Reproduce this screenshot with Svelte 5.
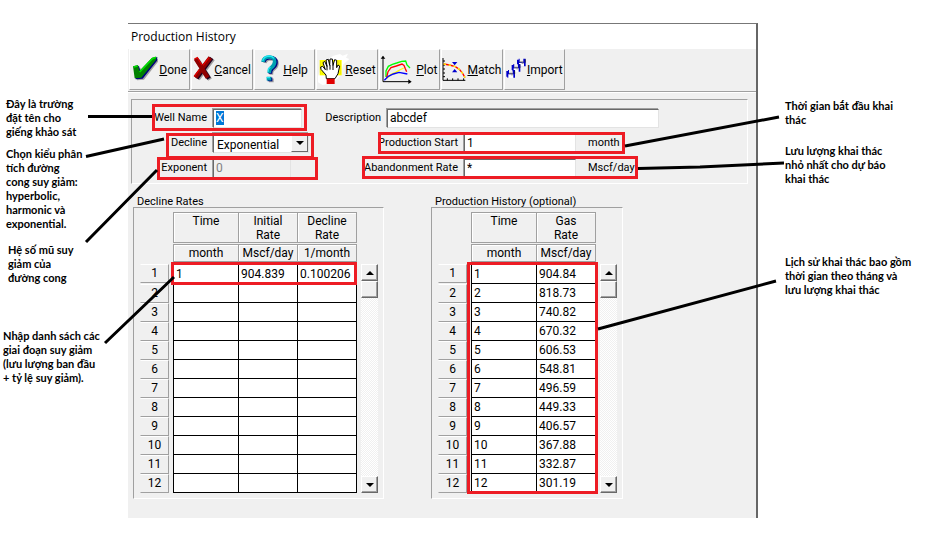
<script>
  import { onMount } from 'svelte';

  const declineRows = Array.from({ length: 12 }, (_, i) =>
    i === 0 ? ['1', '904.839', '0.100206'] : ['', '', '']
  );
  const rates = ['904.84', '818.73', '740.82', '670.32', '606.53', '548.81', '496.59', '449.33', '406.57', '367.88', '332.87', '301.19'];
  const tables = [
    {
      title: 'Decline Rates',
      heads: [['Time'], ['Initial', 'Rate'], ['Decline', 'Rate']],
      units: ['month', 'Mscf/day', '1/month'],
      rows: declineRows
    },
    {
      title: 'Production History (optional)',
      heads: [['Time'], ['Gas', 'Rate']],
      units: ['month', 'Mscf/day'],
      rows: rates.map((r, i) => [String(i + 1), r])
    }
  ];

  const leftNotes = [
    { cls: 'well', lines: ['Đây là trường', 'đặt tên cho', 'giếng khảo sát'] },
    { cls: 'kind', lines: ['Chọn kiểu phân', 'tích đường', 'cong suy giảm:', 'hyperbolic,', 'harmonic và', 'exponential.'] },
    { cls: 'expo', lines: ['Hệ số mũ suy', 'giảm của', 'đường cong'] },
    { cls: 'list', lines: ['Nhập danh sách các', 'giai đoạn suy giảm', '(lưu lượng ban đầu', '+ tỷ lệ suy giảm).'] }
  ];
  const rightNotes = [
    { cls: 'start', lines: ['Thời gian bắt đầu khai', 'thác'] },
    { cls: 'min', lines: ['Lưu lượng khai thác', 'nhỏ nhất cho dự báo', 'khai thác'] },
    { cls: 'past', lines: ['Lịch sử khai thác bao gồm', 'thời gian theo tháng và', 'lưu lượng khai thác'] }
  ];

  let wellName;
  onMount(() => {
    wellName.focus();
    wellName.select();
  });
</script>

{#snippet notes(list)}
  {#each list as note}
    <p class={note.cls}>{#each note.lines as line, i}{#if i}<br />{/if}{line}{/each}</p>
  {/each}
{/snippet}

<main>
  <aside class="left">{@render notes(leftNotes)}</aside>

  <section class="window">
    <h1>Production History</h1>

    <div class="toolbar">
      <div class="tools">
        <button type="button">
          <svg width="26" height="34" viewBox="0 0 78 102">
            <path fill="#a0a0a0" d="M10 48 25 44 30 58 66 20 78 17 78 26 36 80 15 82z" />
            <path fill="#000080" d="M6 43 21 39 25 55 63 16 76 12 75 23 32 77 11 79z" />
            <path fill="#008000" d="M3 40 18 36 22 54 60 14 73 11 72 20 28 74 8 76z" />
            <path fill="none" stroke="#00e000" stroke-width="5" d="M5 42 17 39M23 57 61 17 72 13" />
          </svg>
          <span><u>D</u>one</span>
        </button>
        <button type="button">
          <svg width="20" height="34" viewBox="0 0 60 102">
            <path fill="none" stroke="#a0a0a0" stroke-width="13" d="M15 22 51 80M60 18 15 78" />
            <path fill="none" stroke="#200020" stroke-width="13" d="M11 19 48 77M56 15 11 76" />
            <path fill="none" stroke="#900000" stroke-width="13" d="M8 17 44 74M52 14 7 73" />
            <path fill="none" stroke="#e00000" stroke-width="4" d="M4 18 13 14 27 36M48 14 30 37M19 50 4 71" />
          </svg>
          <span><u>C</u>ancel</span>
        </button>
        <button type="button">
          <svg width="18" height="34" viewBox="0 0 54 102">
            <g fill="none" stroke-width="11">
              <path stroke="#a0a0a0" d="M12 30Q14 17 30 17 48 18 48 32 47 43 36 50 31 54 31 65M24 82H38" />
              <path stroke="#000080" d="M9 27Q10 14 27 14 46 14 45 29 44 40 33 47 28 52 28 62M20 79H34" />
              <path stroke="#00a0b0" d="M6 27Q8 12 24 12 42 12 41 27 40 38 30 45 25 49 25 60M17 77H31" />
              <path stroke="#20e8f0" stroke-width="4" d="M5 24Q8 10 24 9 34 9 39 16M22 56V48L28 42M17 74H27" />
            </g>
          </svg>
          <span class="far"><u>H</u>elp</span>
        </button>
        <button type="button">
          <svg width="26" height="34" viewBox="0 0 78 102">
            <path fill="#fff" d="M0 70 8 50 20 26 46 8 66 3 74 8 90 2 84 14 94 18 76 34 66 70 44 90 14 96 0 88z" />
            <path fill="#ff0" d="M5 21H71V67H5z" />
            <path fill="none" stroke="#d8c800" stroke-width="40" stroke-dasharray="2 4" d="M7 44H71" opacity=".5" />
            <path fill="#fff" stroke="#000" stroke-width="3" d="M25 77 24 66 9 49 8 42 14 40 22 50 15 29 20 25 27 40 24 21 31 19 35 37 36 18 43 18 45 37 50 20 56 22 56 44 60 36 65 39 60 62 51 77z" />
            <path fill="none" stroke="#000" stroke-width="3" d="M27 38V52M36 36V50M45 36V51" />
            <path fill="#e00000" d="M26 77H50V93H26z" />
          </svg>
          <span><u>R</u>eset</span>
        </button>
        <button type="button">
          <svg width="31" height="34" viewBox="0 0 93 102">
            <path fill="none" stroke="#000" stroke-width="3" d="M6 11V86H88" />
            <path d="M-1 17 6 8 13 17zM82 79 92 86 82 93z" />
            <g fill="none" stroke-width="4">
              <path stroke="#0f0" d="M15 72V54L22 40 34 34 47 30 62 25 74 24 78 36 87 45" />
              <path stroke="#f00" d="M17 74 21 56 30 44 46 39 63 33 69 37 73 47 77 56" />
              <path stroke="#ff0" d="M18 76 30 64 44 58 56 51 68 45" />
              <path stroke="#00f" d="M10 82 22 70 37 63 54 58 79 63" />
            </g>
          </svg>
          <span class="far"><u>P</u>lot</span>
        </button>
        <button type="button">
          <svg width="24" height="34" viewBox="0 0 72 102">
            <path fill="none" stroke="#000" stroke-width="3" d="M3 15V82H70M3 24H9M3 36H9M3 48H9M3 60H9M3 71H9M16 82V76M32 82V76M48 82V76M65 82V76" />
            <path fill="none" stroke="#f00" stroke-width="4" d="M5 33 22 36 40 41 52 49 62 61 69 74" />
            <path fill="none" stroke="#ff0" stroke-width="4" stroke-dasharray="7 8" d="M5 33 22 36 40 41 52 49 62 61 69 74" />
            <path fill="#00c" d="M30 27H46L38 37zM30 58H46L38 48z" />
          </svg>
          <span><u>M</u>atch</span>
        </button>
        <button type="button">
          <svg width="20" height="34" viewBox="0 0 60 102">
            {#each [[33, 17], [17, 33], [1, 51]] as [x, y]}
              <g transform="translate({x} {y})">
                <path fill="#0000c8" d="M0 3H5V0H8V11H19V0H26V23H3V20H0z" />
                <path fill="#f0f0f0" d="M9 0H18V8H9z" />
                <path fill="#fff" d="M6 13H21V24H6z" />
                <path fill="none" stroke="#202020" stroke-width="2" d="M8 10H19M25 2V12" />
                <path fill="#a0a0a0" d="M14 12H20V16H14z" />
              </g>
            {/each}
          </svg>
          <span><u>I</u>mport</span>
        </button>
      </div>
    </div>

    <form class="details">
      <div class="col names">
        <div class="row"><label for="well">Well Name</label><input id="well" class="wide" bind:this={wellName} value="X" /></div>
        <div class="row">
          <label for="decline">Decline</label>
          <div class="drop">
            <select id="decline"><option>Exponential</option><option>Hyperbolic</option><option>Harmonic</option></select>
            <i class="arrow"></i>
          </div>
        </div>
        <div class="row"><label for="exponent">Exponent</label><input id="exponent" class="short" value="0" disabled /></div>
      </div>
      <div class="col limits">
        <div class="row"><label class="desc" for="description">Description</label><input id="description" class="long" value="abcdef" /></div>
        <div class="row"><label for="start">Production Start</label><input id="start" value="1" /><span class="unit">month</span></div>
        <div class="row"><label for="rate">Abandonment Rate</label><input id="rate" value="*" /><span class="unit">Mscf/day</span></div>
      </div>
    </form>

    <div class="grids">
      {#each tables as t}
        <section>
          <h2>{t.title}</h2>
          <div class="frame">
            <table aria-label={t.title}>
              <thead>
                <tr>
                  <td class="corner"></td>
                  {#each t.heads as head}
                    <th><div class="name">{#each head as word, i}{#if i}<br />{/if}{word}{/each}</div></th>
                  {/each}
                </tr>
                <tr>
                  <td class="corner"></td>
                  {#each t.units as unit}<th><div class="measure">{unit}</div></th>{/each}
                </tr>
              </thead>
              <tbody>
                {#each t.rows as row, n}
                  <tr>
                    <th class="num" scope="row"><div>{n + 1}</div></th>
                    {#each row as cell}<td>{cell}</td>{/each}
                  </tr>
                {/each}
              </tbody>
            </table>
            <div class="scroll">
              <button type="button" aria-label="Scroll up"><i class="up"></i></button>
              <div class="thumb"></div>
              <button type="button" class="end" aria-label="Scroll down"><i class="down"></i></button>
            </div>
          </div>
        </section>
      {/each}
    </div>
  </section>

  <aside class="right">{@render notes(rightNotes)}</aside>

  <svg class="marks" width="951" height="551" viewBox="0 0 951 551" aria-hidden="true">
    <g fill="none" stroke="#ed1c24" stroke-width="3">
      <rect x="153.500" y="105.500" width="152" height="24" />
      <rect x="167.500" y="134.500" width="145" height="23" />
      <rect x="158.500" y="158.500" width="158" height="20" />
      <rect x="379.500" y="133.500" width="244" height="19" />
      <rect x="363.500" y="157.500" width="273" height="20" />
      <rect x="172.500" y="263.500" width="183" height="20" />
      <rect x="468.500" y="263.500" width="128" height="229" />
    </g>
    <path fill="none" stroke="#000" stroke-width="3" d="M88 116.500H152M86 156.500 164 139M86 242 157 170M105 343 174 277M625 146 779 117M638 168.500 700 167 784 163M598 329 776 281" />
  </svg>
</main>

<style>
  :global(body) { margin: 0; background: #fff; }
  main {
    position: relative;
    display: grid;
    grid-template-columns: 128px minmax(630px, 1fr) 193px;
    align-items: start;
    font: 11px/14px Roboto, "Liberation Sans", sans-serif;
    color: #000;
  }
  input, select, button { font: inherit; color: inherit; box-sizing: border-box; margin: 0; }

  aside { font: bold 11px/14px Lato, "Open Sans", sans-serif; white-space: nowrap; }
  aside p { margin: 0; }
  .left { padding: 97px 0 0 3px; }
  .left .well, .left .kind { padding-left: 3px; }
  .left .kind { margin-top: 8px; }
  .left .expo { margin-top: 12px; padding-left: 5px; }
  .left .list { margin-top: 44px; }
  .right { padding: 99px 0 0 27px; }
  .right .min { margin-top: 17px; }
  .right .past { margin-top: 69px; }

  .window {
    margin-top: 23px;
    padding-bottom: 19px;
    border-top: 1px solid #777;
    border-right: 2px solid #666;
    background: #f0f0f0;
  }
  h1 {
    margin: 0;
    padding: 0 3px;
    background: #fff;
    font: 12px/25px "Open Sans", "Noto Sans", sans-serif;
  }
  .toolbar {
    padding: 0 1px 1px;
    border-bottom: 1px solid #a0a0a0;
    box-shadow: 0 1px #fff;
  }
  .tools {
    display: grid;
    grid-template-columns: repeat(7, minmax(0, 1fr));
    column-gap: 1px;
    max-width: 436px;
    font-size: 12px;
  }
  .tools button {
    display: flex;
    align-items: center;
    justify-content: center;
    gap: 1px;
    height: 41px;
    padding: 0;
    border: 1px solid;
    border-color: #fff #a0a0a0 #a0a0a0 #fff;
    background: #f0f0f0;
  }
  .tools svg { flex: none; overflow: visible; }
  .tools .far { margin-left: 3px; }

  .details {
    display: flex;
    margin: 7px 8px 0 3px;
    padding: 8px 0 5px;
    border: 1px solid;
    border-color: #a0a0a0 #fff #fff #a0a0a0;
  }
  .col { display: flex; flex-direction: column; gap: 5px; }
  .names { flex: 0 0 192px; }
  .limits { flex: 1; }
  .row { display: flex; align-items: center; height: 20px; }
  .row label { flex: none; text-align: right; margin-right: 6px; }
  .names label { width: 75px; }
  .limits label { width: 134px; }
  .limits label.desc { width: 57px; }
  .row input, .row select {
    width: 112px;
    height: 19px;
    padding: 0 2px;
    border: 1px solid;
    border-color: #696969 #e3e3e3 #e3e3e3 #696969;
    border-radius: 0;
    outline: 0;
    background: #fff;
    box-shadow: -1px -1px #a0a0a0;
    font-size: 12px;
  }
  .row input.wide { width: 89px; }
  .row input.long { width: 272px; }
  .row input.short { width: 78px; background: #f0f0f0; color: #808080; }
  .row input::selection { background: #0078d7; color: #fff; }
  .unit { margin-left: 12px; }
  .drop { position: relative; }
  .row select { width: 96px; height: 20px; appearance: none; display: block; padding: 3px 0 0 3px; }
  .arrow {
    position: absolute;
    top: 2px;
    right: 1px;
    width: 15px;
    height: 15px;
    border: 1px solid;
    border-color: #fff #696969 #696969 #fff;
    background: #f0f0f0;
    pointer-events: none;
  }
  .arrow::after, .up, .down {
    content: "";
    display: block;
    width: 0;
    margin: 5px auto 0;
    border: 4px solid transparent;
    border-bottom: 0;
    border-top-color: #000;
  }

  .grids { display: flex; gap: 47px; margin: 11px 5px 0; }
  h2 { margin: 0 0 -1px; padding-left: 4px; font: inherit; line-height: 13px; white-space: nowrap; }
  .grids section { width: min-content; }
  .frame {
    display: flex;
    gap: 4px;
    padding: 4px 5px 5px 6px;
    border: 1px solid;
    border-color: #a0a0a0 #fff #fff #a0a0a0;
  }
  table { border-spacing: 0; table-layout: fixed; width: min-content; font-size: 12px; }
  th, td { padding: 0; font-weight: normal; box-sizing: border-box; }
  .corner { width: 33px; min-width: 33px; }
  thead th { width: 59px; min-width: 59px; }
  thead th:nth-child(2) { width: 65px; min-width: 65px; }
  thead th:last-child { width: 60px; min-width: 60px; }
  thead div {
    box-sizing: border-box;
    border: 1px solid #a0a0a0;
    border-right-width: 0;
    box-shadow: inset 1px 1px #fff;
  }
  thead th:last-child div { border-right-width: 1px; }
  .name { height: 31px; padding-top: 1px; margin-bottom: 1px; line-height: 14px; }
  .measure { height: 18px; padding-top: 1px; margin-bottom: 2px; }
  tbody td {
    height: 19px;
    padding-left: 2px;
    border: solid #000;
    border-width: 0 0 1px 1px;
    background: #fff;
    line-height: 14px;
  }
  tbody td:last-child { border-right-width: 1px; }
  tbody tr:first-child td { height: 20px; border-top-width: 1px; }
  .num { vertical-align: top; }
  .num div {
    box-sizing: border-box;
    width: 29px;
    height: 19px;
    border: 1px solid;
    border-color: #fff #a0a0a0 #a0a0a0 #f0f0f0;
    line-height: 17px;
  }
  .scroll {
    display: flex;
    flex-direction: column;
    width: 17px;
    margin-top: 52px;
    background: repeating-conic-gradient(#fff 0 25%, #f0f0f0 0 50%) 0 0 / 2px 2px;
  }
  .scroll button, .thumb {
    box-sizing: border-box;
    height: 17px;
    padding: 0;
    border: 1px solid;
    border-color: #fff #696969 #696969 #fff;
    background: #f0f0f0;
    box-shadow: inset -1px -1px #a0a0a0;
  }
  .scroll i { margin: 0 auto; }
  .up { transform: rotate(180deg); }
  .end { margin-top: auto; }
  .marks { position: absolute; inset: 0; pointer-events: none; }
</style>
